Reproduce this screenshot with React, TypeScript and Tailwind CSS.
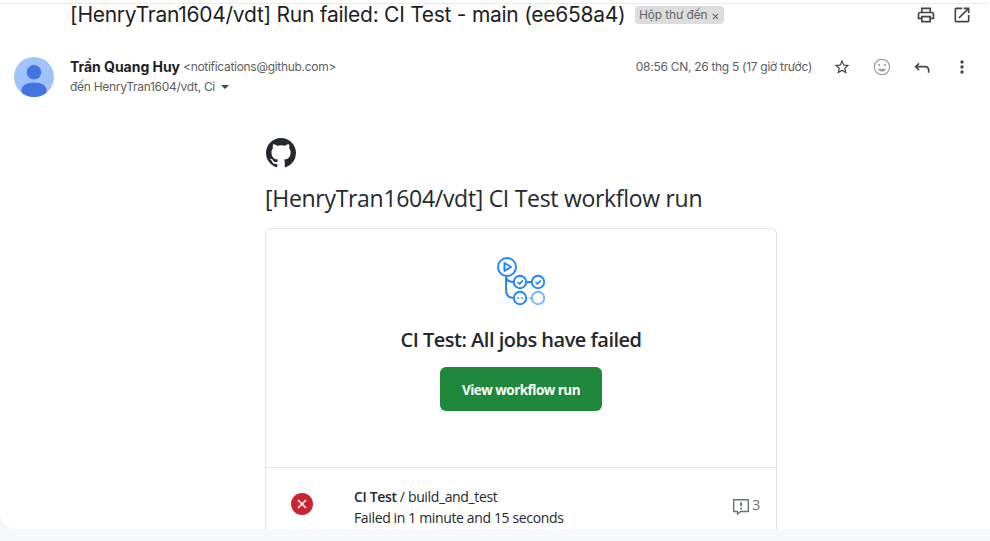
const google = "font-['Inter','Noto_Sans',sans-serif]";
const segoe = "font-['Open_Sans','Noto_Sans',sans-serif]";

function MaterialIcon({ d, className }: { d: string; className: string }) {
  return (
    <svg viewBox="0 0 24 24" fill="currentColor" className={`shrink-0 ${className}`}>
      <path d={d} />
    </svg>
  );
}

const icons = {
  print:
    "M19 8h-1V3H6v5H5c-1.66 0-3 1.34-3 3v6h4v4h12v-4h4v-6c0-1.66-1.34-3-3-3zM8 5h8v3H8V5zm8 12v2H8v-4h8v2zm2-2v-2H6v2H4v-4c0-.55.45-1 1-1h14c.55 0 1 .45 1 1v4h-2z",
  open: "M19 19H5V5h7V3H5a2 2 0 0 0-2 2v14a2 2 0 0 0 2 2h14c1.1 0 2-.9 2-2v-7h-2v7zM14 3v2h3.59l-9.83 9.83 1.41 1.41L19 6.41V10h2V3h-7z",
  star: "M22 9.24l-7.19-.62L12 2 9.19 8.63 2 9.24l5.46 4.73L5.82 21 12 17.27 18.18 21l-1.63-7.03L22 9.24zM12 15.4l-3.76 2.27 1-4.28-3.32-2.88 4.38-.38L12 6.1l1.71 4.04 4.38.38-3.32 2.88 1 4.28L12 15.4z",
  smile:
    "M12 2a10 10 0 1 0 0 20 10 10 0 0 0 0-20zm0 18.400a8.400 8.400 0 1 1 0-16.800 8.400 8.400 0 0 1 0 16.800zM8.500 8.200a1.300 1.300 0 1 0 0 2.600 1.300 1.300 0 0 0 0-2.600zm7 0a1.300 1.300 0 1 0 0 2.600 1.300 1.300 0 0 0 0-2.600zM7 14c.75 2.100 2.650 3.500 5 3.500s4.250-1.400 5-3.500H7z",
  reply: "M7.7 16.3 3 11.6l4.7-4.7 1.4 1.4-2.3 2.3H16c2.8 0 5 2.2 5 5V19h-2v-3.4c0-1.65-1.35-3-3-3H6.8l2.3 2.3-1.4 1.4z",
  more: "M12 8a2 2 0 1 0 0-4 2 2 0 0 0 0 4zm0 2a2 2 0 1 0 0 4 2 2 0 0 0 0-4zm0 6a2 2 0 1 0 0 4 2 2 0 0 0 0-4z",
};

function TitleBar() {
  return (
    <div className="flex h-6 items-center pl-[70px] pr-[18px]">
      <h1 className="w-[554px] whitespace-nowrap text-[21px] leading-6 tracking-[-0.265px] text-[#1f1f1f]">
        [HenryTran1604/vdt] Run failed: CI Test - main (ee658a4)
      </h1>
      <span className="ml-[11px] flex h-[18px] w-[89px] shrink-0 items-center justify-between whitespace-nowrap rounded bg-[#ddd] pl-1 pr-[5px] text-xs text-[#666]">
        <span className="tracking-[-0.15px]">Hộp thư đến</span>
        <svg viewBox="0 0 8 8" className="mt-0.5 size-[7px]" fill="none" stroke="#666" strokeWidth="1.2">
          <path d="M1 1l6 6M7 1L1 7" />
        </svg>
      </span>
      <div className="ml-auto flex gap-4 text-[#444746]">
        <MaterialIcon d={icons.print} className="size-5" />
        <MaterialIcon d={icons.open} className="size-5" />
      </div>
    </div>
  );
}

function SenderRow() {
  return (
    <div className="mt-[30px] flex h-10 pl-[14px] pr-[18px]">
      <svg viewBox="0 0 40 40" className="size-10 shrink-0">
        <defs>
          <clipPath id="avatar">
            <circle cx="20" cy="20" r="20" />
          </clipPath>
        </defs>
        <g clipPath="url(#avatar)">
          <path fill="#a0c3ff" d="M0 0h40v40H0z" />
          <circle cx="20" cy="15.3" r="7.3" fill="#4374e0" />
          <path
            fill="#4374e0"
            d="M7.5 40v-7.2c0-4.2 5.2-7.3 12.5-7.3s12.5 3.100 12.500 7.300V40z"
          />
        </g>
      </svg>
      <div className="ml-4 whitespace-nowrap">
        <div className="flex h-5 items-center">
          <span className="text-sm font-bold tracking-[-0.03px] text-[#1f1f1f]">Trần Quang Huy</span>
          <span className="ml-[3px] text-xs tracking-[-0.3px] text-[#5e5e5e]">
            &lt;notifications@github.com&gt;
          </span>
        </div>
        <div className="flex h-5 items-center text-xs text-[#5e5e5e]">
          <span className="tracking-[-0.29px]">đến HenryTran1604/vdt, Ci</span>
          <svg viewBox="0 0 8 4" className="ml-1.5 h-1 w-2" fill="#444746">
            <path d="M0 0h8L4 4z" />
          </svg>
        </div>
      </div>
      <div className="ml-auto flex h-5 items-center text-[#444746]">
        <span className="mr-5 whitespace-nowrap text-xs tracking-[-0.29px] text-[#5e5e5e]">
          08:56 CN, 26 thg 5 (17 giờ trước)
        </span>
        <div className="flex gap-5">
          <MaterialIcon d={icons.star} className="mt-px size-[18px] mx-px" />
          <MaterialIcon d={icons.smile} className="size-5 text-[#a2a3a3]" />
          <MaterialIcon d={icons.reply} className="size-5" />
          <MaterialIcon d={icons.more} className="size-5" />
        </div>
      </div>
    </div>
  );
}

function GitHubMark() {
  return (
    <svg viewBox="0 0 16 16" className="ml-px size-[30px]" fill="#24292f">
      <path d="M8 0C3.58 0 0 3.58 0 8c0 3.54 2.29 6.53 5.47 7.59.4.07.55-.17.55-.38 0-.19-.01-.82-.01-1.49-2.01.37-2.53-.49-2.69-.94-.09-.23-.48-.94-.82-1.13-.28-.15-.68-.52-.01-.53.63-.01 1.08.58 1.23.82.72 1.21 1.87.87 2.33.66.07-.52.28-.87.51-1.07-1.78-.2-3.64-.89-3.64-3.95 0-.87.31-1.59.82-2.15-.08-.2-.36-1.02.08-2.12 0 0 .67-.21 2.2.82.64-.18 1.32-.27 2-.27s1.36.09 2 .27c1.53-1.04 2.2-.82 2.2-.82.44 1.1.16 1.92.08 2.12.51.56.82 1.27.82 2.15 0 3.07-1.87 3.75-3.65 3.95.29.25.54.73.54 1.48 0 1.07-.01 1.93-.01 2.2 0 .21.15.46.55.38A8.01 8.01 0 0 0 16 8c0-4.42-3.58-8-8-8z" />
    </svg>
  );
}

function WorkflowIcon() {
  return (
    <svg viewBox="0 0 49 49" className="h-[49px] w-[49px]" fill="none" stroke="#2188ff" strokeWidth="2" strokeLinejoin="round">
      <circle cx="10" cy="10" r="9" />
      <path d="M7.500 6v8l6.500-4z" />
      <path d="M9 19v13.500q0 8.500 8 8.500M9 19q0 6 8 6M29.500 25H35" />
      <circle cx="23" cy="25" r="6.200" />
      <circle cx="41" cy="25" r="6.200" />
      <path d="M20.500 25l2 2 3.300-3.600M38.500 25l2 2 3.300-3.600" strokeWidth="1.700" />
      <circle cx="23" cy="41" r="6.200" />
      <path d="M20 41h2M24 41h2" stroke="#79b8ff" />
      <path d="M32.500 41H35" stroke="#79b8ff" />
      <circle cx="41" cy="41" r="6.200" stroke="#79b8ff" />
    </svg>
  );
}

function JobRow() {
  return (
    <div className="flex h-[70px] border-t border-[#e1e4e8] pl-[25px] pr-4 text-[#24292e]">
      <svg viewBox="0 0 22 22" className="mt-[25px] size-[22px] shrink-0">
        <circle cx="11" cy="11" r="11" fill="#cb2431" />
        <path d="M7 7l8 8M15 7l-8 8" stroke="#fff" strokeWidth="1.600" />
      </svg>
      <div className="ml-[41px] mt-[18px] whitespace-nowrap text-sm leading-[21px]">
        <p className="tracking-[-0.36px]">
          <span className="font-semibold">CI Test</span> / build_and_test
        </p>
        <p className="tracking-[-0.36px]">Failed in 1 minute and 15 seconds</p>
      </div>
      <div className="ml-auto mt-[27px] flex h-5 items-center text-sm text-[#6a737d]">
        <svg viewBox="0 0 16 16" className="mr-[3px] mt-[3px] size-4" fill="none" stroke="currentColor" strokeWidth="1.400" strokeLinejoin="round">
          <path d="M.7.800h14.600v11.700H7.500L4.500 15.200v-2.700H.700z" />
          <path d="M8 3.300v3.700M8 8.500v2" strokeWidth="1.800" />
        </svg>
        <span className="tracking-[-0.3px]">3</span>
      </div>
    </div>
  );
}

function EmailBody() {
  return (
    <div className={`ml-[265px] mt-[41px] w-[512px] ${segoe}`}>
      <GitHubMark />
      <h2 className="mt-3 whitespace-nowrap text-[23px] leading-9 tracking-[-0.3px] text-[#24292e]">
        [HenryTran1604/vdt] CI Test workflow run
      </h2>
      <div className="mt-3 rounded-t-md border border-b-0 border-[#e1e4e8]">
        <div className="flex h-[238px] flex-col items-center pt-7">
          <WorkflowIcon />
          <h3 className="mt-[19px] whitespace-nowrap text-xl font-semibold leading-[30px] tracking-[-0.5px] text-[#24292e]">
            CI Test: All jobs have failed
          </h3>
          <a className="mt-3 flex h-11 w-[162px] items-center justify-center whitespace-nowrap rounded-md bg-[#1f883d] pt-0.5 text-[13.5px] font-bold tracking-[-0.52px] text-white">
            View workflow run
          </a>
        </div>
        <JobRow />
      </div>
    </div>
  );
}

export default function App() {
  return (
    <div className={`h-[541px] w-[990px] overflow-hidden bg-[#f6f8fc] ${google}`}>
      <main className="h-[529px] overflow-hidden rounded-bl-2xl bg-white">
        <div className="mr-[3px] h-1 border-b border-[#ebebeb]" />
        <div className="-mt-px">
          <TitleBar />
        </div>
        <SenderRow />
        <EmailBody />
      </main>
    </div>
  );
}
